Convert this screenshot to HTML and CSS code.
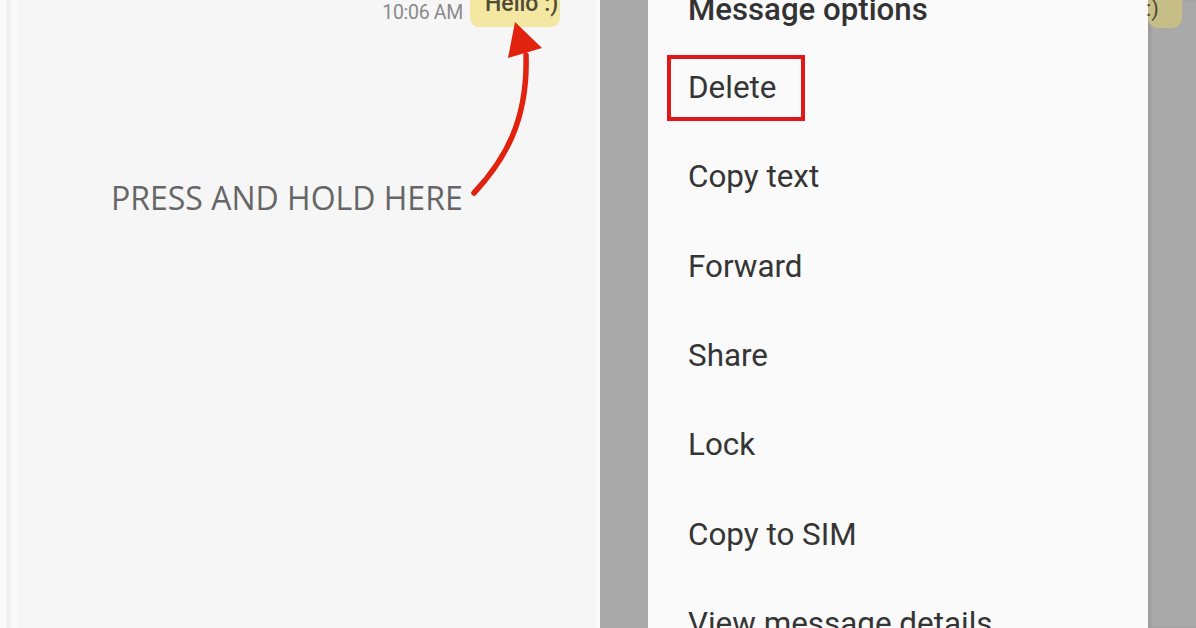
FILE: index.html
```html
<!DOCTYPE html>
<html>
<head>
<meta charset="utf-8">
<link rel="stylesheet" href="styles.css">
</head>
<body>
<div class="screen">
  <section class="chat">
    <div class="msg-row">
      <span class="time">10:06 AM</span>
      <span class="bubble">Hello :)</span>
    </div>
    <p class="hint">PRESS AND HOLD HERE</p>
    <svg class="arrow" width="100" height="200" viewBox="0 0 100 200">
      <path d="M14 193 C 45 160, 68 120, 66 55" fill="none" stroke="#e0220f" stroke-width="5.5" stroke-linecap="round"/>
      <polygon points="55,22 48,58 82,48" fill="#e0220f"/>
    </svg>
  </section>
  <section class="overlay">
    <div class="menu">
      <div class="menu-title">Message options</div>
      <ul class="menu-list">
        <li class="menu-item"><span class="highlight">Delete</span></li>
        <li class="menu-item">Copy text</li>
        <li class="menu-item">Forward</li>
        <li class="menu-item">Share</li>
        <li class="menu-item">Lock</li>
        <li class="menu-item">Copy to SIM</li>
        <li class="menu-item">View message details</li>
      </ul>
    </div>
    <div class="edge">
      <span class="dim-bubble">:)</span>
    </div>
  </section>
</div>
</body>
</html>
```

FILE: styles.css
```css
html, body {
  margin: 0;
  padding: 0;
  width: 1196px;
  height: 628px;
  overflow: hidden;
  background: #f6f6f6;
}

.screen {
  display: flex;
  width: 1196px;
  height: 628px;
}

.chat {
  position: relative;
  width: 600px;
  height: 628px;
  background: #f6f6f6;
  box-shadow: inset 6px 0 0 #fbfbfb, inset 11px 0 0 #f2f2f2, inset 18px 0 0 #fafafa, inset -4px 0 0 #fbfbfb;
  font-family: Roboto, "Liberation Sans", sans-serif;
}

.msg-row {
  display: flex;
  justify-content: flex-end;
  align-items: flex-start;
  gap: 7px;
  padding-right: 40px;
}

.time {
  margin-top: 2px;
  font-size: 19.5px;
  line-height: 22px;
  color: #8a8a8a;
  letter-spacing: -0.3px;
}

.bubble {
  display: block;
  width: 90px;
  box-sizing: border-box;
  height: 27px;
  padding-left: 15px;
  background: #f4e7a1;
  border-radius: 0 0 9px 9px;
  font-size: 23px;
  line-height: 8px;
  color: #4e4b36;
  font-weight: 500;
  overflow: hidden;
}

.hint {
  margin: 151px 0 0 111px;
  font-family: "Open Sans", "DejaVu Sans", sans-serif;
  font-size: 32px;
  line-height: 40px;
  font-weight: 500;
  color: #666666;
  letter-spacing: 0;
}

.arrow {
  position: absolute;
  left: 460px;
  top: 0;
}

.overlay {
  display: flex;
  flex: 1;
  height: 628px;
  background: #a9a9a9;
  padding-left: 48px;
  box-sizing: border-box;
}

.menu {
  width: 500px;
  height: 628px;
  background: #fafafa;
  box-sizing: border-box;
  padding-left: 40px;
  font-family: Roboto, "Liberation Sans", sans-serif;
  color: #333333;
  overflow: hidden;
}

.menu-title {
  margin-top: -10px;
  height: 53px;
  line-height: 40px;
  font-size: 31.2px;
  font-weight: 500;
  color: #333333;
}

.menu-list {
  list-style: none;
  margin: 0;
  padding: 0;
}

.menu-item {
  display: flex;
  align-items: center;
  height: 89.3px;
  font-size: 31.4px;
  color: #353535;
}

.highlight {
  display: inline-block;
  margin-left: -21px;
  padding: 0 25px 0 17px;
  line-height: 58px;
  border: 4px solid #e3161b;
}

.edge {
  flex: 1;
  height: 628px;
  background: #a9a9a9;
  box-shadow: inset 3px 0 3px rgba(0,0,0,0.08);
}

.dim-bubble {
  display: block;
  width: 34px;
  height: 28px;
  margin-left: 0;
  background: #c6be86;
  border-radius: 0 0 10px 10px;
  font-family: Roboto, "Liberation Sans", sans-serif;
  font-size: 22px;
  line-height: 18px;
  color: #4c4a30;
  text-indent: -2px;
}
```
